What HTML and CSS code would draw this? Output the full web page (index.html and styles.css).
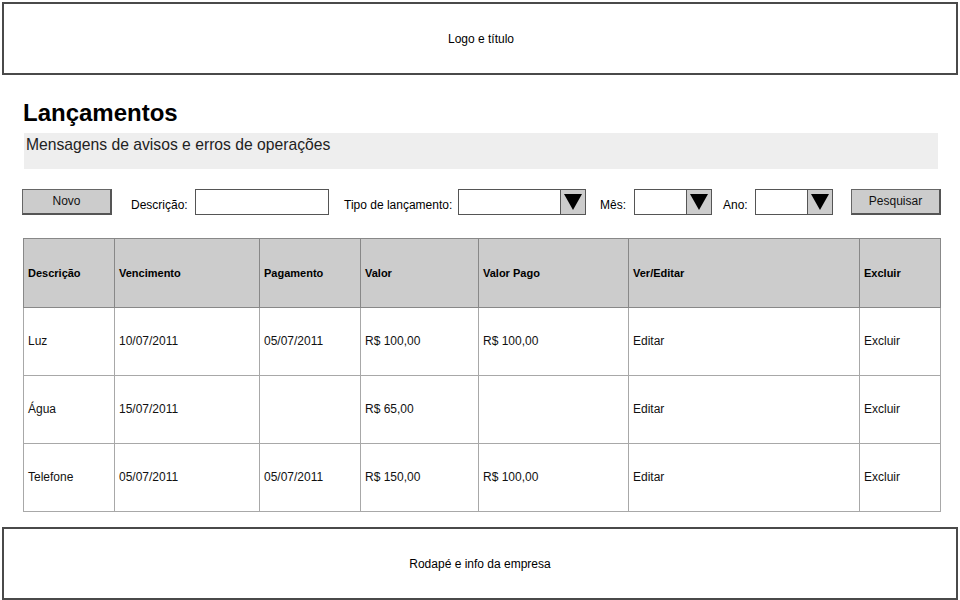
FILE: index.html
```html
<!DOCTYPE html>
<html lang="pt-BR">
<head>
<meta charset="utf-8">
<title>Lançamentos</title>
<link rel="stylesheet" href="styles.css">
</head>
<body>
<header class="top-box">Logo e título</header>
<main class="content">
  <h1 class="page-title">Lançamentos</h1>
  <div class="messages">Mensagens de avisos e erros de operações</div>
  <div class="filters">
    <button class="btn btn-novo">Novo</button>
    <span class="lbl lbl-desc">Descrição:</span>
    <span class="field field-desc"></span>
    <span class="lbl lbl-tipo">Tipo de lançamento:</span>
    <span class="select select-tipo"><span class="sel-arrow"><span class="tri"></span></span></span>
    <span class="lbl lbl-mes">Mês:</span>
    <span class="select select-small"><span class="sel-arrow"><span class="tri"></span></span></span>
    <span class="lbl lbl-ano">Ano:</span>
    <span class="select select-small select-ano"><span class="sel-arrow"><span class="tri"></span></span></span>
    <button class="btn btn-pesq">Pesquisar</button>
  </div>
  <table class="grid">
    <colgroup>
      <col class="c1"><col class="c2"><col class="c3"><col class="c4"><col class="c5"><col class="c6"><col class="c7">
    </colgroup>
    <thead>
      <tr><th>Descrição</th><th>Vencimento</th><th>Pagamento</th><th>Valor</th><th>Valor Pago</th><th>Ver/Editar</th><th>Excluir</th></tr>
    </thead>
    <tbody>
      <tr><td>Luz</td><td>10/07/2011</td><td>05/07/2011</td><td>R$ 100,00</td><td>R$ 100,00</td><td>Editar</td><td>Excluir</td></tr>
      <tr><td>Água</td><td>15/07/2011</td><td></td><td>R$ 65,00</td><td></td><td>Editar</td><td>Excluir</td></tr>
      <tr><td>Telefone</td><td>05/07/2011</td><td>05/07/2011</td><td>R$ 150,00</td><td>R$ 100,00</td><td>Editar</td><td>Excluir</td></tr>
    </tbody>
  </table>
</main>
<footer class="bottom-box">Rodapé e info da empresa</footer>
</body>
</html>
```

FILE: styles.css
```css
* { box-sizing: border-box; }
html, body { margin: 0; padding: 0; background: #fff; }
body {
  width: 960px;
  height: 600px;
  overflow: hidden;
  font-family: "Liberation Sans", Arial, sans-serif;
  color: #000;
}
.top-box {
  margin: 2px 2px 0 2px;
  height: 73px;
  border: 2px solid #4a4a4a;
  display: flex;
  align-items: center;
  justify-content: center;
  font-size: 12px;
  padding-left: 2px;
}
.content {
  padding-left: 23px;
  padding-right: 20px;
}
.page-title {
  margin: 25px 0 0 0;
  font-size: 24px;
  line-height: 26px;
  font-weight: bold;
}
.messages {
  margin: 7px 0 0 1px;
  width: 914px;
  height: 36px;
  background: #eeeeee;
  font-size: 15.7px;
  line-height: 18px;
  padding: 3px 0 0 2px;
  color: #222;
}
.filters {
  margin-top: 20px;
  margin-left: -1px;
  height: 26px;
  display: flex;
  align-items: center;
}
.filters > * { flex-shrink: 0; }
.btn {
  height: 26px;
  width: 90px;
  background: #cccccc;
  border: 1px solid #666;
  border-right: 2px solid #555;
  border-bottom: 2px solid #555;
  font-family: inherit;
  font-size: 12px;
  color: #111;
  padding: 0 0 2px 0;
}
.lbl {
  font-size: 12px;
  padding-top: 6px;
  white-space: nowrap;
}
.lbl-desc { margin-left: 19px; width: 64px; }
.field {
  height: 26px;
  border: 1px solid #555;
  background: #fff;
}
.field-desc { width: 134px; }
.lbl-tipo { margin-left: 15px; width: 114px; }
.select {
  height: 26px;
  border: 1px solid #555;
  background: #fff;
  display: flex;
  justify-content: flex-end;
}
.select-tipo { width: 128px; }
.select-small { width: 78px; }
.sel-arrow {
  width: 25px;
  height: 100%;
  background: #cccccc;
  border-left: 1px solid #555;
  display: flex;
  align-items: center;
  justify-content: center;
}
.tri {
  width: 0;
  height: 0;
  border-left: 9px solid transparent;
  border-right: 9px solid transparent;
  border-top: 16px solid #000;
}
.lbl-mes { margin-left: 14px; width: 34px; }
.lbl-ano { margin-left: 11px; width: 32px; }
.btn-pesq { margin-left: 18px; }
.grid {
  margin-top: 23px;
  border-collapse: collapse;
  table-layout: fixed;
  width: 917px;
  border: 1px solid #8a8a8a;
}
.c1 { width: 91px; }
.c2 { width: 145px; }
.c3 { width: 101px; }
.c4 { width: 118px; }
.c5 { width: 150px; }
.c6 { width: 231px; }
.c7 { width: 81px; }
.grid th, .grid td {
  height: 68px;
  padding: 0 0 2px 4px;
  text-align: left;
  vertical-align: middle;
  border: 1px solid #a8a8a8;
  font-size: 12px;
  white-space: nowrap;
}
.grid th {
  background: #cccccc;
  font-size: 11px;
  font-weight: bold;
  border-color: #888;
  height: 69px;
  padding-bottom: 0;
}
.grid td { color: #111; }
.bottom-box {
  margin: 15px 2px 0 2px;
  height: 73px;
  border: 2px solid #4a4a4a;
  display: flex;
  align-items: center;
  justify-content: center;
  font-size: 12px;
}
```
